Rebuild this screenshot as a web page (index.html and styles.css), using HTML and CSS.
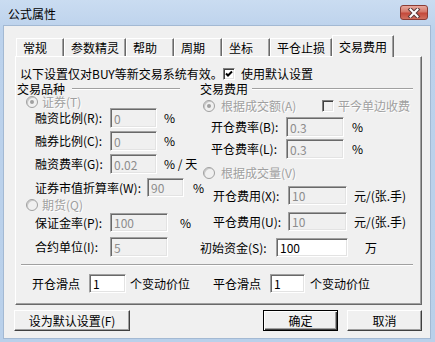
FILE: index.html
```html
<!DOCTYPE html>
<html lang="zh-CN">
<head>
  <meta charset="UTF-8">
  <title>公式属性</title>
  <link rel="stylesheet" href="styles.css">
</head>
<body>
  <div class="window">
    <div class="titlebar">
      <span class="title">公式属性</span>
      <span class="close">
        <svg width="14" height="10" viewBox="0 0 14 10">
          <path d="M3.5 1.5 L10.5 8.5 M10.5 1.5 L3.5 8.5" stroke="#5a3a3a" stroke-width="4" stroke-linecap="square"/>
          <path d="M3.5 1.5 L10.5 8.5 M10.5 1.5 L3.5 8.5" stroke="#fff" stroke-width="2" stroke-linecap="square"/>
        </svg>
      </span>
    </div>

    <div class="client">
      <div class="tabs">
        <div class="tab">常规</div>
        <div class="tab">参数精灵</div>
        <div class="tab">帮助</div>
        <div class="tab">周期</div>
        <div class="tab">坐标</div>
        <div class="tab">平仓止损</div>
        <div class="tab active">交易费用</div>
      </div>

      <div class="panel">
        <div class="notice">
          <span class="notice-text">以下设置仅对BUY等新交易系统有效。</span>
          <span class="check checked">
            <svg width="8" height="8" viewBox="0 0 8 8"><path d="M1 3.5 L3 5.5 L7 1.5" stroke="#000" stroke-width="2" fill="none"/></svg>
          </span>
          <span>使用默认设置</span>
        </div>

        <div class="cols">
          <!-- 交易品种 -->
          <div class="col">
            <div class="legend legend-left"><span>交易品种</span><span class="etch"></span></div>
            <div class="opt opt-stock"><span class="radio on"></span>证券(T)</div>
            <div class="field row-rz"><span class="lbl">融资比例(R):</span><input class="box w47" value="0" disabled><span class="unit">%</span></div>
            <div class="field row-rq"><span class="lbl">融券比例(C):</span><input class="box w47" value="0" disabled><span class="unit">%</span></div>
            <div class="field row-fee"><span class="lbl">融资费率(G):</span><input class="box w47" value="0.02" disabled><span class="unit">% / 天</span></div>
            <div class="field row-mv"><span class="lbl lbl-long">证券市值折算率(W):</span><input class="box w37" value="90" disabled><span class="unit">%</span></div>
            <div class="opt opt-future"><span class="radio"></span>期货(Q)</div>
            <div class="field row-margin"><span class="lbl">保证金率(P):</span><input class="box w58" value="100" disabled><span class="unit unit-wide">%</span></div>
            <div class="field row-unit"><span class="lbl">合约单位(I):</span><input class="box w58" value="5" disabled></div>
          </div>

          <!-- 交易费用 -->
          <div class="col">
            <div class="legend legend-right"><span>交易费用</span><span class="etch"></span></div>
            <div class="opt opt-amount">
              <span class="radio on"></span><span class="opt-label">根据成交额(A)</span>
              <span class="check disabled"></span>平今单边收费
            </div>
            <div class="field row-open-rate"><span class="lbl">开仓费率(B):</span><input class="box w58" value="0.3" disabled><span class="unit">%</span></div>
            <div class="field row-close-rate"><span class="lbl">平仓费率(L):</span><input class="box w58" value="0.3" disabled><span class="unit">%</span></div>
            <div class="opt opt-volume"><span class="radio"></span>根据成交量(V)</div>
            <div class="field row-open-fee"><span class="lbl">开仓费用(X):</span><input class="box w59" value="10" disabled><span class="unit">元/(张.手)</span></div>
            <div class="field row-close-fee"><span class="lbl">平仓费用(U):</span><input class="box w59" value="10" disabled><span class="unit">元/(张.手)</span></div>
            <div class="field row-capital"><span class="lbl lbl-capital">初始资金(S):</span><input class="box w72" value="100"><span class="unit unit-wan">万</span></div>
          </div>
        </div>

        <div class="sep etch"></div>

        <div class="slip">
          <span class="slip-lbl">开仓滑点</span><input class="box w37" value="1"><span class="slip-unit">个变动价位</span>
          <span class="slip-lbl slip-second">平仓滑点</span><input class="box w35" value="1"><span class="slip-unit slip-unit-2">个变动价位</span>
        </div>
      </div>

      <div class="buttons">
        <button class="btn btn-wide">设为默认设置(F)</button>
        <button class="btn btn-default">确定</button>
        <button class="btn">取消</button>
      </div>
    </div>
  </div>
</body>
</html>
```

FILE: styles.css
```css
body {
  margin: 0;
  font: 12px/14px "Noto Sans CJK SC", "Liberation Sans", sans-serif;
  color: #000;
}
.window {
  width: 435px;
  height: 342px;
  display: flex;
  flex-direction: column;
  background: linear-gradient(#cadcf1, #bcd2ec 30px, #b9d0ea);
}
.titlebar {
  height: 26px;
  display: flex;
  align-items: center;
  padding: 0 7px 0 8px;
}
.title {
  margin-top: 1px;
}
.close {
  margin-left: auto;
  margin-top: -1px;
  box-sizing: border-box;
  width: 28px;
  height: 15px;
  display: flex;
  align-items: center;
  justify-content: center;
  border: 1px solid #8a3c35;
  border-radius: 3px;
  background: linear-gradient(#e8a99e, #d4786a 45%, #c4493b 55%, #d0705f);
}
.client {
  height: 312px;
  margin: 0 5px 0 4px;
  padding: 0 8px 0 11px;
  background: #f0f0f0;
  box-shadow: 0 0 0 1px #a3b9d3;
  display: flex;
  flex-direction: column;
}

/* tabs */
.tabs {
  display: flex;
  align-items: flex-end;
  height: 21px;
  margin: 9px 0 0 1px;
  position: relative;
  z-index: 1;
}
.tab {
  box-sizing: border-box;
  height: 18px;
  min-width: 48px;
  padding: 1px 6px 0 6px;
  line-height: 16px;
  border-top: 1px solid #fff;
  border-left: 1px solid #fff;
  border-right: 1px solid #696969;
  box-shadow: inset -1px 0 #a0a0a0;
  background: #f0f0f0;
}
.tab.active {
  height: 22px;
  min-width: 62px;
  margin-bottom: -1px;
  padding-top: 2px;
  line-height: 17px;
}

.panel {
  box-sizing: border-box;
  height: 249px;
  border: 1px solid;
  border-color: #fff #696969 #696969 #fff;
  box-shadow: inset -1px -1px #a0a0a0;
}
.notice {
  display: flex;
  align-items: center;
  height: 16px;
  margin: 9px 0 0 4px;
}
.notice-text {
  width: 203px;
  white-space: nowrap;
}

/* check boxes and radios */
.check {
  box-sizing: border-box;
  width: 12px;
  height: 12px;
  margin-right: 6px;
  display: flex;
  align-items: center;
  justify-content: center;
  background: #fff;
  border: 1px solid;
  border-color: #808080 #fff #fff #808080;
  box-shadow: inset 1px 1px #404040, inset -1px -1px #e3e3e3;
}
.check.disabled {
  background: #f0f0f0;
  margin-right: 4px;
}
.radio {
  box-sizing: border-box;
  width: 12px;
  height: 12px;
  margin-right: 4px;
  border-radius: 50%;
  border: 1px solid #a0a0a0;
  background: #f0f0f0;
  box-shadow: inset 1px 1px #c8c8c8;
  display: flex;
  align-items: center;
  justify-content: center;
}
.radio.on::after {
  content: "";
  width: 4px;
  height: 4px;
  border-radius: 50%;
  background: #a0a0a0;
}
.opt {
  display: flex;
  align-items: center;
  height: 14px;
  color: #a0a0a0;
  text-shadow: 1px 1px #fff;
}

/* group boxes */
.cols {
  display: grid;
  grid-template-columns: 184px 1fr;
}
.legend {
  display: flex;
  align-items: center;
  height: 12px;
  margin-top: 1px;
}
.etch {
  height: 0;
  border-top: 1px solid #a0a0a0;
  border-bottom: 1px solid #fff;
}
.legend-left span:first-child {
  margin-left: 1px;
}
.legend-left .etch {
  margin-left: 7px;
  width: 108px;
}
.legend-right .etch {
  margin-left: 4px;
  width: 161px;
}

.field {
  display: flex;
  align-items: center;
  height: 20px;
  white-space: nowrap;
}
.lbl {
  width: 75px;
  flex: none;
}
.lbl-long {
  width: 112px;
}
.lbl-capital {
  width: 76px;
}
.unit {
  margin-left: 7px;
}
.unit-wide {
  margin-left: 12px;
}
.unit-wan {
  margin-left: 17px;
}

.box {
  box-sizing: border-box;
  height: 100%;
  padding: 0 0 0 3px;
  margin: 0;
  font: inherit;
  color: #000;
  background: #fff;
  border: 1px solid;
  border-color: #a0a0a0 #fff #fff #a0a0a0;
  box-shadow: inset 1px 1px #696969, inset -1px -1px #e3e3e3;
  outline: none;
}
.box:disabled {
  color: #8d8d8d;
  background: #f0f0f0;
}
.w35 { width: 35px; }
.w37 { width: 37px; }
.w47 { width: 47px; }
.w58 { width: 58px; }
.w59 { width: 59px; }
.w72 { width: 72px; }

/* left column rows */
.opt-stock { height: 13px; margin-left: 10px; }
.row-rz, .row-rq, .row-fee, .row-mv, .row-margin, .row-unit { margin-left: 19px; }
.row-rq, .row-fee { margin-top: 3px; }
.row-mv { margin-top: 4px; height: 19px; }
.row-mv .unit { margin-left: 9px; }
.opt-future { margin: 1px 0 0 10px; }
.row-margin { margin-top: 1px; height: 19px; }
.row-unit { margin-top: 5px; }

/* right column rows */
.opt-amount { margin: 4px 0 0 3px; }
.opt-amount .radio, .opt-volume .radio { margin-right: 6px; }
.opt-label { width: 101px; }
.row-open-rate { margin: 4px 0 0 11px; }
.row-close-rate { margin: 2px 0 0 11px; }
.row-open-rate .unit, .row-close-rate .unit { margin-left: 8px; }
.opt-volume { margin: 7px 0 0 3px; }
.row-open-fee { margin: 6px 0 0 13px; height: 19px; }
.row-close-fee { margin: 7px 0 0 13px; height: 19px; }
.row-capital { margin-top: 7px; height: 19px; }

.sep {
  margin: 7px 0 0 5px;
  width: 392px;
}
.slip {
  display: flex;
  align-items: center;
  height: 19px;
  margin: 8px 0 0 16px;
  white-space: nowrap;
}
.slip-lbl {
  width: 57px;
}
.slip-second {
  margin-left: 23px;
}
.slip-unit {
  margin-left: 4px;
}
.slip-unit-2 {
  margin-left: 5px;
}

/* dialog buttons */
.buttons {
  display: flex;
  gap: 9px;
  margin: 5px 0 0 -1px;
}
.btn {
  box-sizing: border-box;
  width: 75px;
  height: 21px;
  padding: 0;
  font: inherit;
  color: #000;
  background: #f0f0f0;
  border: 1px solid;
  border-color: #fff #404040 #404040 #fff;
  box-shadow: inset -1px -1px #a0a0a0;
}
.btn-wide {
  width: 116px;
  margin-right: auto;
}
.btn-default {
  border: 1px solid #000;
  box-shadow: inset 1px 1px #fff, inset -1px -1px #404040, inset -2px -2px #a0a0a0;
}
```
